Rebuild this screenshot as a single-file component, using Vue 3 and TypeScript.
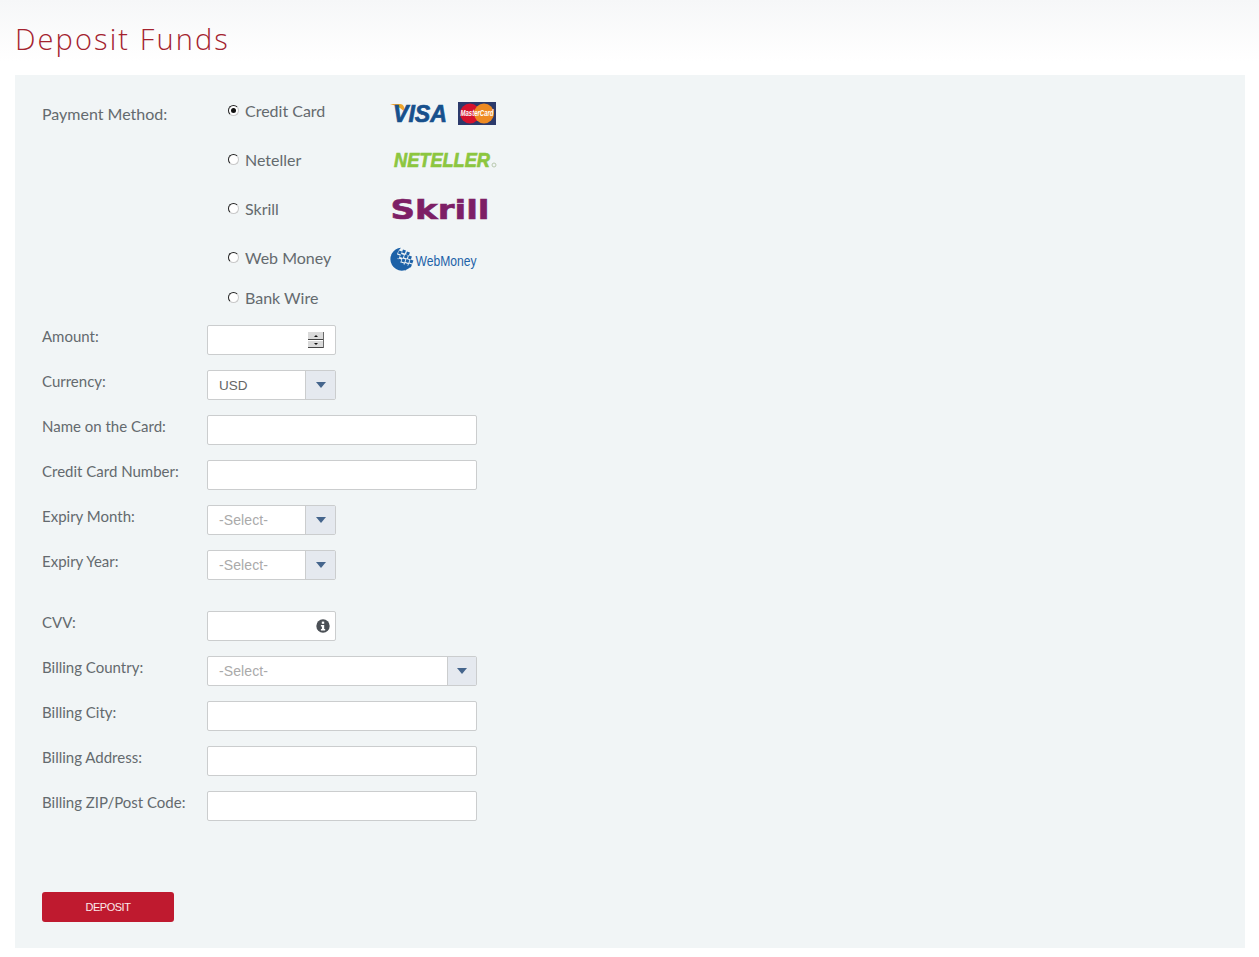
<script setup lang="ts">
type Row = { label: string; kind: 'number' | 'select' | 'text' | 'cvv'; value?: string; wide?: boolean; spaced?: boolean }

const methods = [
  { name: 'Credit Card', logo: 'card', checked: true },
  { name: 'Neteller', logo: 'neteller', checked: false },
  { name: 'Skrill', logo: 'skrill', checked: false },
  { name: 'Web Money', logo: 'webmoney', checked: false },
  { name: 'Bank Wire', logo: '', checked: false },
]

const rows: Row[] = [
  { label: 'Amount:', kind: 'number' },
  { label: 'Currency:', kind: 'select', value: 'USD' },
  { label: 'Name on the Card:', kind: 'text', wide: true },
  { label: 'Credit Card Number:', kind: 'text', wide: true },
  { label: 'Expiry Month:', kind: 'select', value: '-Select-' },
  { label: 'Expiry Year:', kind: 'select', value: '-Select-', spaced: true },
  { label: 'CVV:', kind: 'cvv' },
  { label: 'Billing Country:', kind: 'select', value: '-Select-', wide: true },
  { label: 'Billing City:', kind: 'text', wide: true },
  { label: 'Billing Address:', kind: 'text', wide: true },
  { label: 'Billing ZIP/Post Code:', kind: 'text', wide: true },
]

const globeCells = [
  [9, 4], [13, 3], [17, 5],
  [7, 8], [11, 7.5], [15, 8], [19, 9],
  [8.5, 12], [12.5, 12], [16.5, 12.5], [20.5, 13],
  [11, 16], [15, 16.5], [19, 17],
  [14, 20],
]
</script>

<template>
  <div class="page">
    <h1 class="title">Deposit Funds</h1>
    <section class="panel">
      <div class="payment">
        <div class="payment-label">Payment Method:</div>
        <div class="methods">
          <div v-for="m in methods" :key="m.name" class="method">
            <span class="radio" :class="{ on: m.checked }"></span>
            <span class="method-name">{{ m.name }}</span>
            <div class="logo">
              <svg v-if="m.logo === 'card'" width="120" height="40" viewBox="0 0 120 40">
                <path d="M0 14 H10 Q13 14 14 17 L16 24 Q12 17 0 14Z" fill="#eea52c" />
                <text x="3" y="32" class="visa" textLength="54" lengthAdjust="spacingAndGlyphs">VISA</text>
                <rect x="68" y="12" width="38" height="23" fill="#2c3a6b" />
                <circle cx="80" cy="23.5" r="10" fill="#d5122d" />
                <circle cx="94" cy="23.5" r="10" fill="#ee8a22" />
                <text transform="translate(70.5 26) scale(1 1.3)" class="mc" textLength="33" lengthAdjust="spacingAndGlyphs">MasterCard</text>
              </svg>
              <svg v-else-if="m.logo === 'neteller'" width="120" height="40" viewBox="0 0 120 40">
                <text x="4" y="28" class="neteller" textLength="96" lengthAdjust="spacingAndGlyphs">NETELLER</text>
                <circle cx="104" cy="26" r="2" fill="none" stroke="#b9c9ae" stroke-width="1" />
              </svg>
              <svg v-else-if="m.logo === 'skrill'" width="120" height="40" viewBox="0 0 120 40">
                <text x="0.5" y="31" class="skrill" textLength="99" lengthAdjust="spacingAndGlyphs">Skrill</text>
              </svg>
              <svg v-else-if="m.logo === 'webmoney'" width="120" height="40" viewBox="0 0 120 40">
                <g transform="translate(0 9.5)">
                  <path d="M11 1.2 A11.5 11.5 0 1 0 21.5 19 Q12 20 8 13 Q5 7 11 1.2Z" fill="#1d62a8" />
                  <rect
                    v-for="(c, i) in globeCells"
                    :key="i"
                    :x="c[0]"
                    :y="c[1]"
                    width="3.1"
                    height="3.1"
                    fill="#1d62a8"
                    :transform="`rotate(20 ${c[0]} ${c[1]})`"
                  />
                </g>
                <text x="25.5" y="28.5" class="wm" textLength="61" lengthAdjust="spacingAndGlyphs">WebMoney</text>
              </svg>
            </div>
          </div>
        </div>
      </div>

      <div v-for="r in rows" :key="r.label" class="row" :class="{ spaced: r.spaced }">
        <label class="label">{{ r.label }}</label>
        <div class="control" :class="{ wide: r.wide }">
          <div v-if="r.kind === 'select'" class="select">
            <span class="select-value" :class="{ placeholder: r.value !== 'USD' }">{{ r.value }}</span>
            <span class="arrow"><i></i></span>
          </div>
          <div v-else class="field">
            <input class="input" type="text" />
            <svg v-if="r.kind === 'number'" class="spin" width="16" height="16" viewBox="0 0 16 16">
              <rect x="0" y="0" width="16" height="16" fill="#fff" />
              <rect x="0" y="0" width="16" height="7" fill="#dadada" />
              <rect x="0" y="7" width="16" height="1" fill="#444" />
              <rect x="0" y="9" width="16" height="6" fill="#dadada" />
              <rect x="0" y="15" width="16" height="1" fill="#444" />
              <rect x="15" y="0" width="1" height="16" fill="#6a6a6a" />
              <path d="M6 5 L8 3 L10 5Z" fill="#111" />
              <path d="M6 11 L8 13 L10 11Z" fill="#111" />
            </svg>
            <svg v-if="r.kind === 'cvv'" class="info" width="14" height="14" viewBox="0 0 14 14">
              <circle cx="7" cy="7" r="6.7" fill="#4b5056" />
              <rect x="5.8" y="2.6" width="2.4" height="2.2" fill="#fff" />
              <path d="M4.9 6 H8.2 V10 H9.2 V11.4 H4.9 V10 H5.9 V7.4 H4.9Z" fill="#fff" />
            </svg>
          </div>
        </div>
      </div>

      <button class="deposit" type="button">DEPOSIT</button>
    </section>
  </div>
</template>

<style>
html, body { margin: 0; background: #fff; }
</style>

<style scoped>
.page {
  height: 957px;
  box-sizing: border-box;
  padding: 0 14px 0 15px;
  background: linear-gradient(#f6f7f8 0, #ffffff 62px);
  font-family: Lato, "Liberation Sans", sans-serif;
  color: #646a6e;
}
.title {
  margin: 0;
  height: 75px;
  box-sizing: border-box;
  padding-top: 20px;
  font-family: "Open Sans", Lato, sans-serif;
  font-weight: 300;
  font-size: 29px;
  line-height: 38px;
  letter-spacing: 2.1px;
  color: #a4232f;
}
.panel {
  height: 873px;
  box-sizing: border-box;
  padding: 24px 27px 0;
  background: #f1f5f6;
}
.payment { display: flex; margin-bottom: 17px; }
.payment-label {
  width: 186px;
  padding-top: 4px;
  font-size: 16px;
  line-height: 22px;
}
.method {
  display: flex;
  align-items: center;
  height: 22px;
  margin-bottom: 27px;
  font-size: 16px;
}
.method:nth-child(4) { margin-bottom: 18px; }
.method:last-child { margin-bottom: 0; }
.radio {
  position: relative;
  width: 11px;
  height: 11px;
  box-sizing: border-box;
  border-radius: 50%;
  background: #fff;
  border: 1px solid #c9c9c9;
  border-top-color: #222;
  border-left-color: #222;
  margin: 1px 6px 0 0;
}
.radio.on::after {
  content: "";
  position: absolute;
  left: 2px;
  top: 2px;
  width: 5px;
  height: 5px;
  border-radius: 50%;
  background: #111;
}
.method-name { width: 145px; }
.logo { display: flex; align-items: center; height: 22px; }
.visa { font: italic 700 24px "Liberation Sans", sans-serif; fill: #17508c; stroke: #17508c; stroke-width: 0.7px; }
.mc { font: italic 700 6.5px "Liberation Sans", sans-serif; fill: #fff; }
.neteller { font: italic 700 21px "Liberation Sans", sans-serif; fill: #8cc63f; stroke: #8cc63f; stroke-width: 0.7px; }
.skrill { font: 700 27px "DejaVu Sans", sans-serif; fill: #7d1f66; stroke: #7d1f66; stroke-width: 0.6px; }
.wm { font: 400 15px "Liberation Sans", sans-serif; fill: #1d62a8; }
.row { display: flex; margin-bottom: 15px; height: 30px; }
.row.spaced { margin-bottom: 31px; }
.label {
  width: 165px;
  font-size: 15px;
  line-height: 23px;
}
.control { width: 129px; }
.control.wide { width: 270px; }
.field { position: relative; height: 30px; }
.input {
  display: block;
  width: 100%;
  height: 30px;
  box-sizing: border-box;
  border: 1px solid #cbcdce;
  border-radius: 2px;
  background: #fff;
  outline: none;
  padding: 0 11px;
}
.spin { position: absolute; right: 12px; top: 7px; }
.info { position: absolute; right: 6px; top: 8px; }
.select {
  display: flex;
  height: 30px;
  box-sizing: border-box;
  border: 1px solid #cbcdce;
  border-radius: 2px;
  background: #fff;
}
.select-value {
  flex: 1;
  padding-left: 11px;
  font: 13.5px/29px "Liberation Sans", sans-serif;
  color: #666;
}
.select-value.placeholder { font-size: 14px; letter-spacing: 0.1px; color: #aaa; }
.arrow {
  display: flex;
  align-items: center;
  justify-content: center;
  width: 29px;
  background: #e5e9ef;
  border-left: 1px solid #cbcdce;
}
.control.wide .arrow { width: 28px; }
.arrow i {
  width: 0;
  height: 0;
  border-left: 5px solid transparent;
  border-right: 5px solid transparent;
  border-top: 6px solid #45658c;
}
.deposit {
  display: block;
  width: 132px;
  height: 30px;
  margin-top: 71px;
  padding: 0;
  border: 0;
  border-radius: 3px;
  background: #bf1a2f;
  color: #fbe9ea;
  font: 11px "Liberation Sans", sans-serif;
  letter-spacing: -0.5px;
}
</style>
